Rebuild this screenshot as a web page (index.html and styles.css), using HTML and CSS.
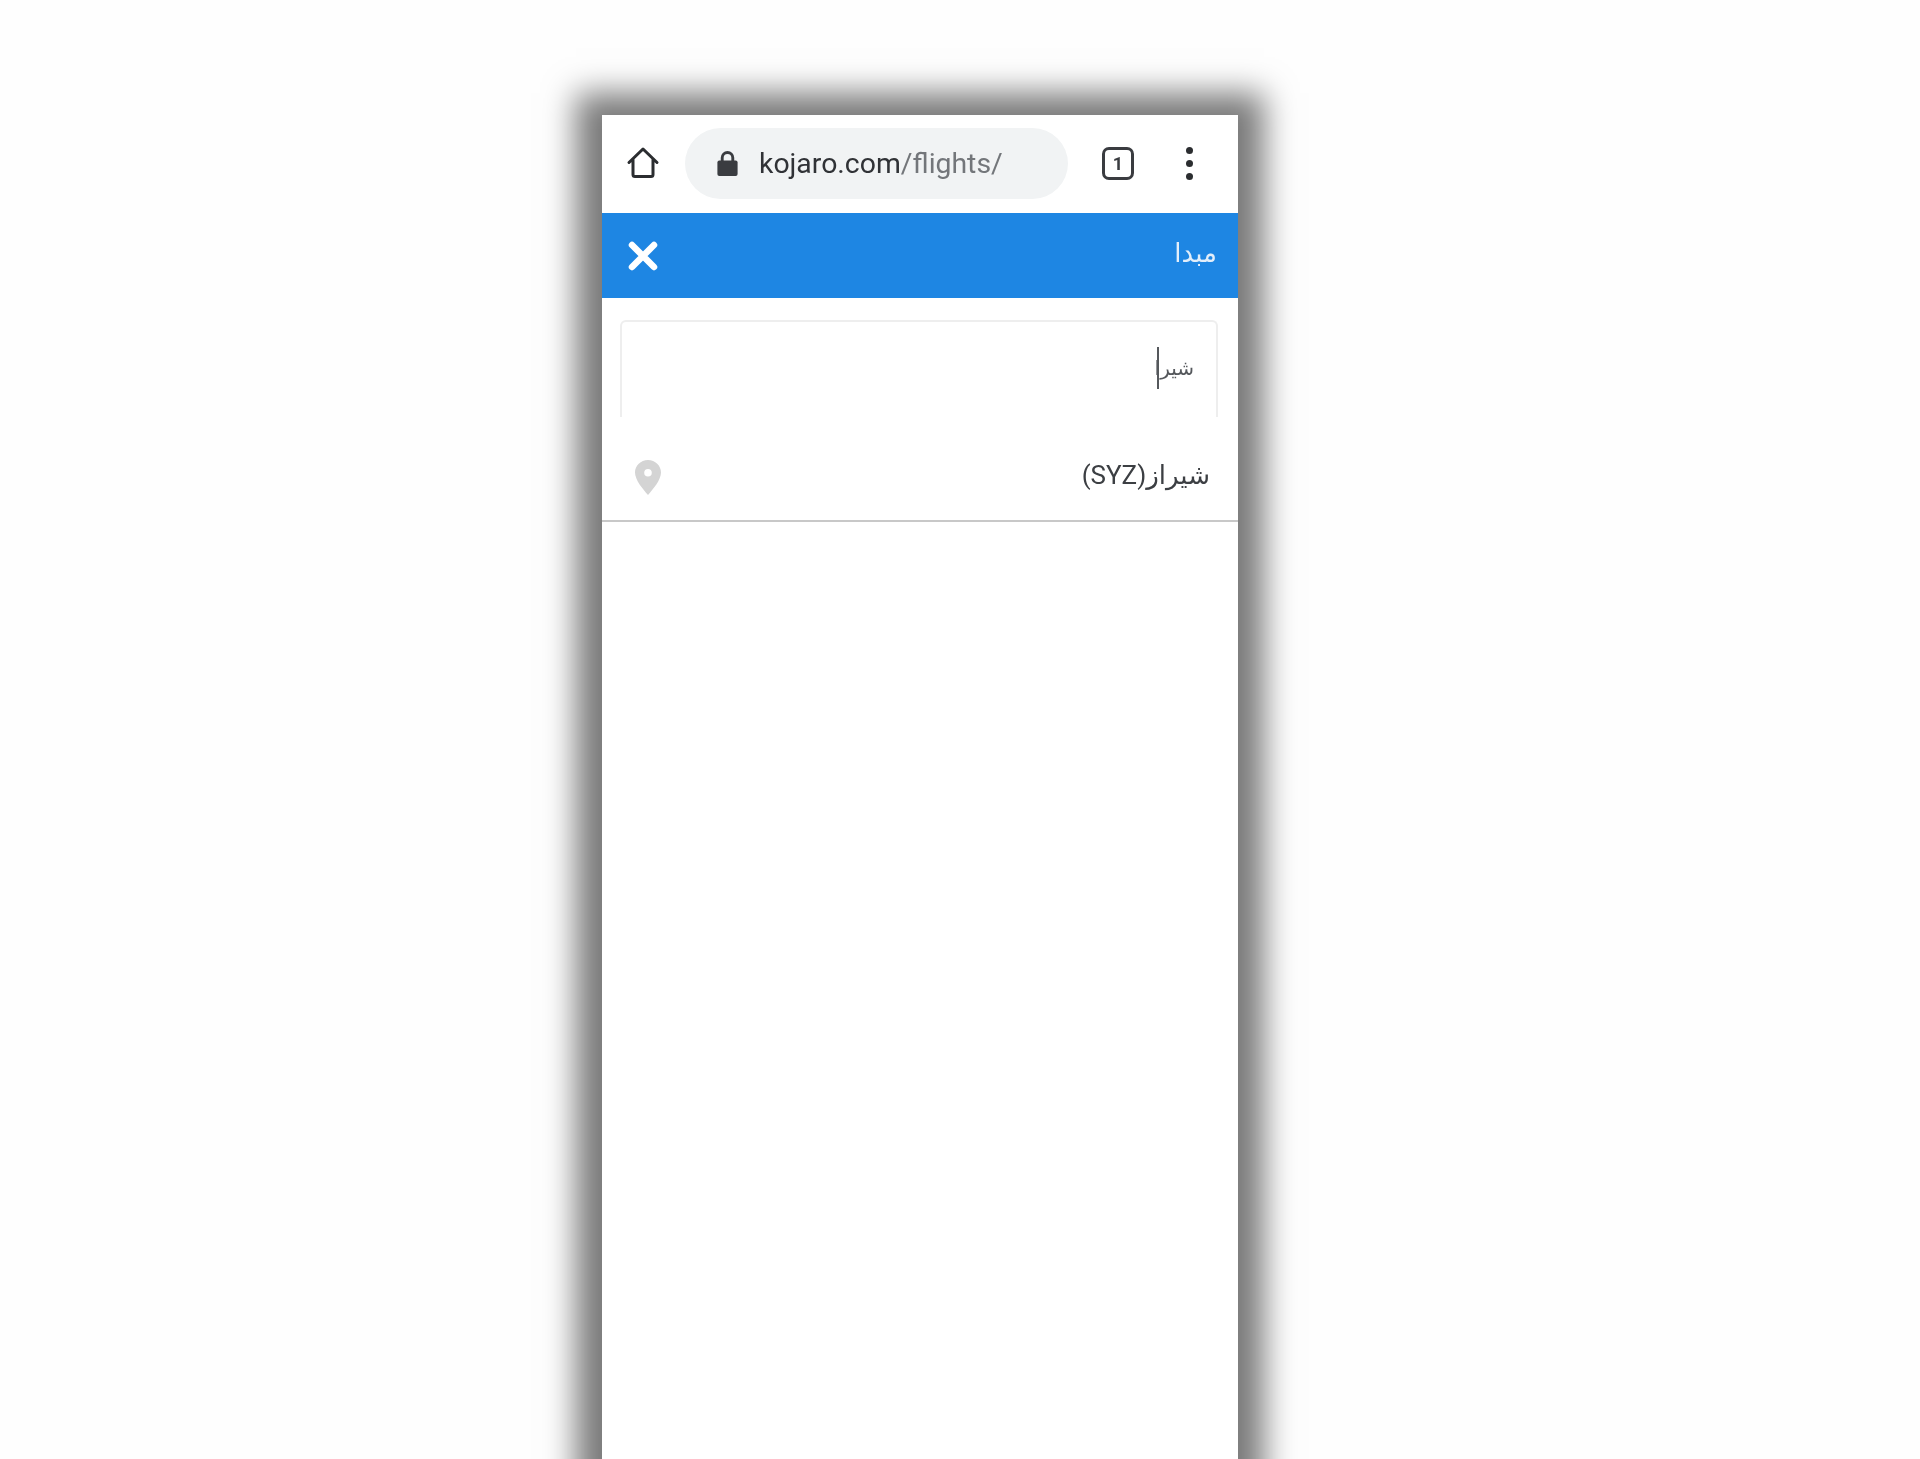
FILE: index.html
```html
<!DOCTYPE html>
<html lang="fa">
<head>
    <meta charset="UTF-8">
    <meta name="viewport" content="width=device-width, initial-scale=1.0">
    <title>kojaro.com/flights/</title>
    <link rel="stylesheet" href="styles.css">
</head>
<body>
    <div class="phone">
        <!-- Browser toolbar -->
        <div class="toolbar" dir="ltr">
            <svg class="home-icon" viewBox="0 0 34 34">
                <path d="M3 16.5 17 3l14 13.500M7 13v15.500a2 2 0 0 0 2 2h16a2 2 0 0 0 2-2V13" fill="none" stroke="#2b2d30" stroke-width="3" stroke-linecap="round" stroke-linejoin="round"/>
            </svg>
            <div class="address-bar">
                <svg class="lock-icon" viewBox="0 0 21 26">
                    <path d="M5 11V7a5.500 5.500 0 0 1 11 0v4" fill="none" stroke="#3a3c40" stroke-width="3"/>
                    <rect x="0" y="10" width="21" height="16" rx="2" fill="#3a3c40"/>
                </svg>
                <span class="url">kojaro.com<span class="url-path">/flights/</span></span>
            </div>
            <div class="tab-count">1</div>
            <div class="menu-dots"><i></i><i></i><i></i></div>
        </div>

        <!-- Page header -->
        <div class="title-bar" dir="ltr">
            <svg class="close-icon" viewBox="0 0 30 30">
                <path d="M4 4 26 26M26 4 4 26" stroke="#fff" stroke-width="6.500" stroke-linecap="round"/>
            </svg>
            <span class="title">مبدا</span>
        </div>

        <div class="search-box" dir="ltr">
            <span class="caret"></span><span class="search-text" dir="rtl">شیرا</span>
        </div>

        <div class="result-row" dir="ltr">
            <svg class="pin-icon" viewBox="0 0 26 35">
                <path fill-rule="evenodd" d="M13 0C5.800 0 0 5.600 0 12.600 0 20 8 29.500 13 35c5-5.500 13-15 13-22.400C26 5.600 20.200 0 13 0Zm0 9a3.800 3.800 0 1 1 0 7.600A3.800 3.800 0 0 1 13 9Z" fill="#d4d4d4"/>
            </svg>
            <span class="result-name" dir="rtl">شیراز(SYZ)</span>
        </div>
    </div>
</body>
</html>
```

FILE: styles.css
```css
html, body {
    margin: 0;
    height: 100%;
    overflow: hidden;
}
body {
    font-family: Roboto, "DejaVu Sans", sans-serif;
    background-color: #fefefe;
    padding: 115px 0 0 602px;
    box-sizing: border-box;
}
.phone {
    width: 636px;
    height: 1400px;
    background-color: #fff;
    box-shadow: 0 4px 30px 26px rgba(0, 0, 0, 0.52);
    filter: blur(0.5px);
}
.toolbar {
    height: 98px;
    display: flex;
    align-items: center;
    box-sizing: border-box;
    padding: 0 0 2px 24px;
}
.home-icon {
    width: 34px;
    height: 34px;
    flex: none;
}
.address-bar {
    margin-left: 25px;
    width: 383px;
    height: 71px;
    border-radius: 36px;
    background-color: #f1f3f4;
    display: flex;
    align-items: center;
    padding-left: 32px;
    box-sizing: border-box;
}
.lock-icon {
    width: 21px;
    height: 25px;
}
.url {
    margin-left: 21px;
    font-size: 28.4px;
    color: #303236;
    white-space: nowrap;
}
.url-path {
    color: #73767a;
}
.tab-count {
    margin-left: 34px;
    width: 32px;
    height: 33px;
    box-sizing: border-box;
    border: 3px solid #3a3c40;
    border-radius: 7px;
    color: #3a3c40;
    font-size: 18px;
    font-weight: 700;
    display: flex;
    align-items: center;
    justify-content: center;
}
.menu-dots {
    margin-left: 52px;
    display: flex;
    flex-direction: column;
    gap: 6px;
}
.menu-dots i {
    display: block;
    width: 7px;
    height: 7px;
    border-radius: 50%;
    background-color: #2b2d30;
}
.title-bar {
    height: 85px;
    background-color: #1e86e3;
    display: flex;
    align-items: center;
    justify-content: space-between;
    padding: 0 21px 0 26px;
}
.close-icon {
    width: 30px;
    height: 30px;
}
.title {
    color: #e3eefa;
    font-size: 26px;
    margin-bottom: 6px;
}
.search-box {
    margin: 22px 20px 0 18px;
    height: 97px;
    box-sizing: border-box;
    border: 2px solid #eeeeee;
    border-bottom: none;
    border-radius: 6px 6px 0 0;
    display: flex;
    align-items: center;
    justify-content: flex-end;
    padding: 0 22px 4px 0;
}
.search-text {
    font-size: 20px;
    color: #55585c;
}
.caret {
    width: 2px;
    height: 42px;
    background-color: #55585c;
    margin-right: -4px;
}
.result-row {
    height: 105px;
    box-sizing: border-box;
    border-bottom: 2px solid #c8c8c8;
    display: flex;
    align-items: center;
    justify-content: space-between;
    padding: 12px 28px 0 33px;
}
.pin-icon {
    width: 26px;
    height: 35px;
    margin-top: 6px;
}
.result-name {
    font-size: 26px;
    color: #3c3f43;
}
```
